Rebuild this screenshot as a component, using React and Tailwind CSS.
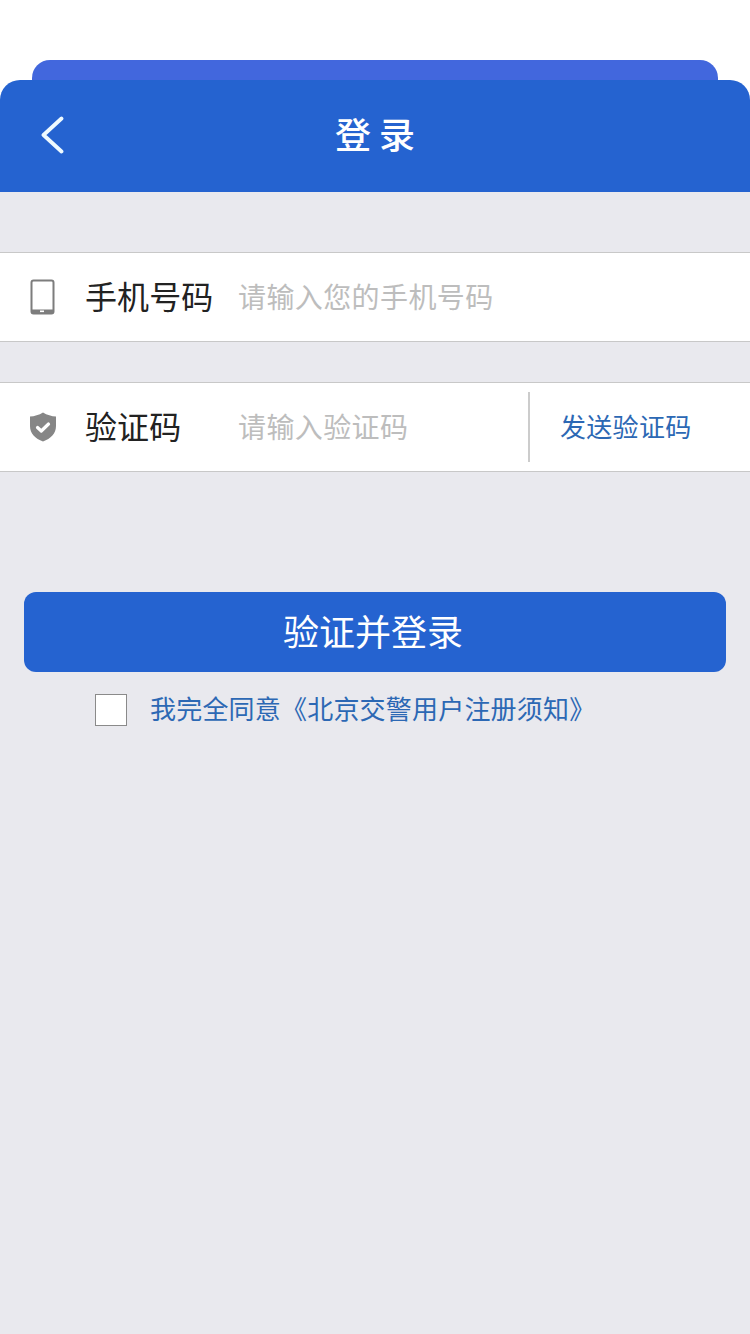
const font = "[font-family:'Noto_Sans_CJK_SC','Liberation_Sans',sans-serif]";

function PhoneIcon() {
  return (
    <svg width="26" height="36" viewBox="0 0 26 36" fill="none">
      <rect x="1.500" y="1.500" width="22" height="33" rx="2" stroke="#7d7d7d" strokeWidth="2" />
      <path d="M1.500 30.500h22v2a2 2 0 0 1-2 2h-18a2 2 0 0 1-2-2z" fill="#7d7d7d" />
      <rect x="10" y="31.500" width="4" height="1.600" fill="#fff" />
    </svg>
  );
}

function ShieldIcon() {
  return (
    <svg width="28" height="30" viewBox="0 0 28 30">
      <path d="M14 0.500C18 3 22.500 4.200 27 4.600V14c0 7.500-5.200 12.600-13 15.500C6.200 26.600 1 21.500 1 14V4.600C5.500 4.200 10 3 14 .5z" fill="#868686" />
      <path d="M8.500 15.500l3.800 3.500L19.500 12" fill="none" stroke="#fff" strokeWidth="3.200" strokeLinecap="round" strokeLinejoin="round" />
    </svg>
  );
}

function Row({ icon, label, placeholder, children }) {
  return (
    <div className="flex h-[90px] items-center border-y border-[#c8c8c8] bg-white">
      <div className="flex w-[85px] justify-center">{icon}</div>
      <span className="w-[153px] pb-[4px] text-[32px] leading-none tracking-[0.1px] text-[#222222]">{label}</span>
      <span className="flex-1 pb-[2px] text-[28px] leading-none tracking-[0.4px] text-[#bdbdbd]">{placeholder}</span>
      {children}
    </div>
  );
}

export default function App() {
  return (
    <div className={`${font} flex min-h-[1334px] flex-col bg-[#e9e9ee]`}>
      <div className="bg-white pt-[60px]">
        <div className="mx-[32px] h-[20px] rounded-t-[18px] bg-[#4267dd]" />
        <header className="relative flex h-[112px] items-center justify-center rounded-t-[20px] bg-[#2563d0]">
          <svg className="absolute left-[40px] top-[36px]" width="24" height="38" viewBox="0 0 24 38" fill="none">
            <path d="M21.500 2.500L3.500 19l18 16.500" stroke="#eefaff" strokeWidth="3.800" strokeLinecap="round" strokeLinejoin="round" />
          </svg>
          <h1 className="pb-[6px] text-[36px] font-medium leading-none text-white">登 录</h1>
        </header>
      </div>

      <div className="mt-[60px] flex flex-col gap-[40px]">
        <Row icon={<PhoneIcon />} label="手机号码" placeholder="请输入您的手机号码" />
        <Row icon={<ShieldIcon />} label="验证码" placeholder="请输入验证码">
          <button className="flex h-[70px] w-[222px] items-center border-l-2 border-[#cccccc] pb-[2px] pl-[30px] text-[26px] leading-none tracking-[0.3px] text-[#2c68b4]">
            发送验证码
          </button>
        </Row>
      </div>

      <button className="mx-[24px] mt-[120px] flex h-[80px] items-center justify-center rounded-[12px] bg-[#2563d0] pb-[4px] pr-[4px] text-[36px] leading-none text-white">
        验证并登录
      </button>

      <div className="mt-[22px] flex items-center pl-[95px]">
        <span className="h-[32px] w-[32px] border border-[#8a8a8a] bg-white" />
        <span className="ml-[23px] pb-[4px] text-[26px] leading-none tracking-[0.2px] text-[#2c68b4]">我完全同意《北京交警用户注册须知》</span>
      </div>
    </div>
  );
}
